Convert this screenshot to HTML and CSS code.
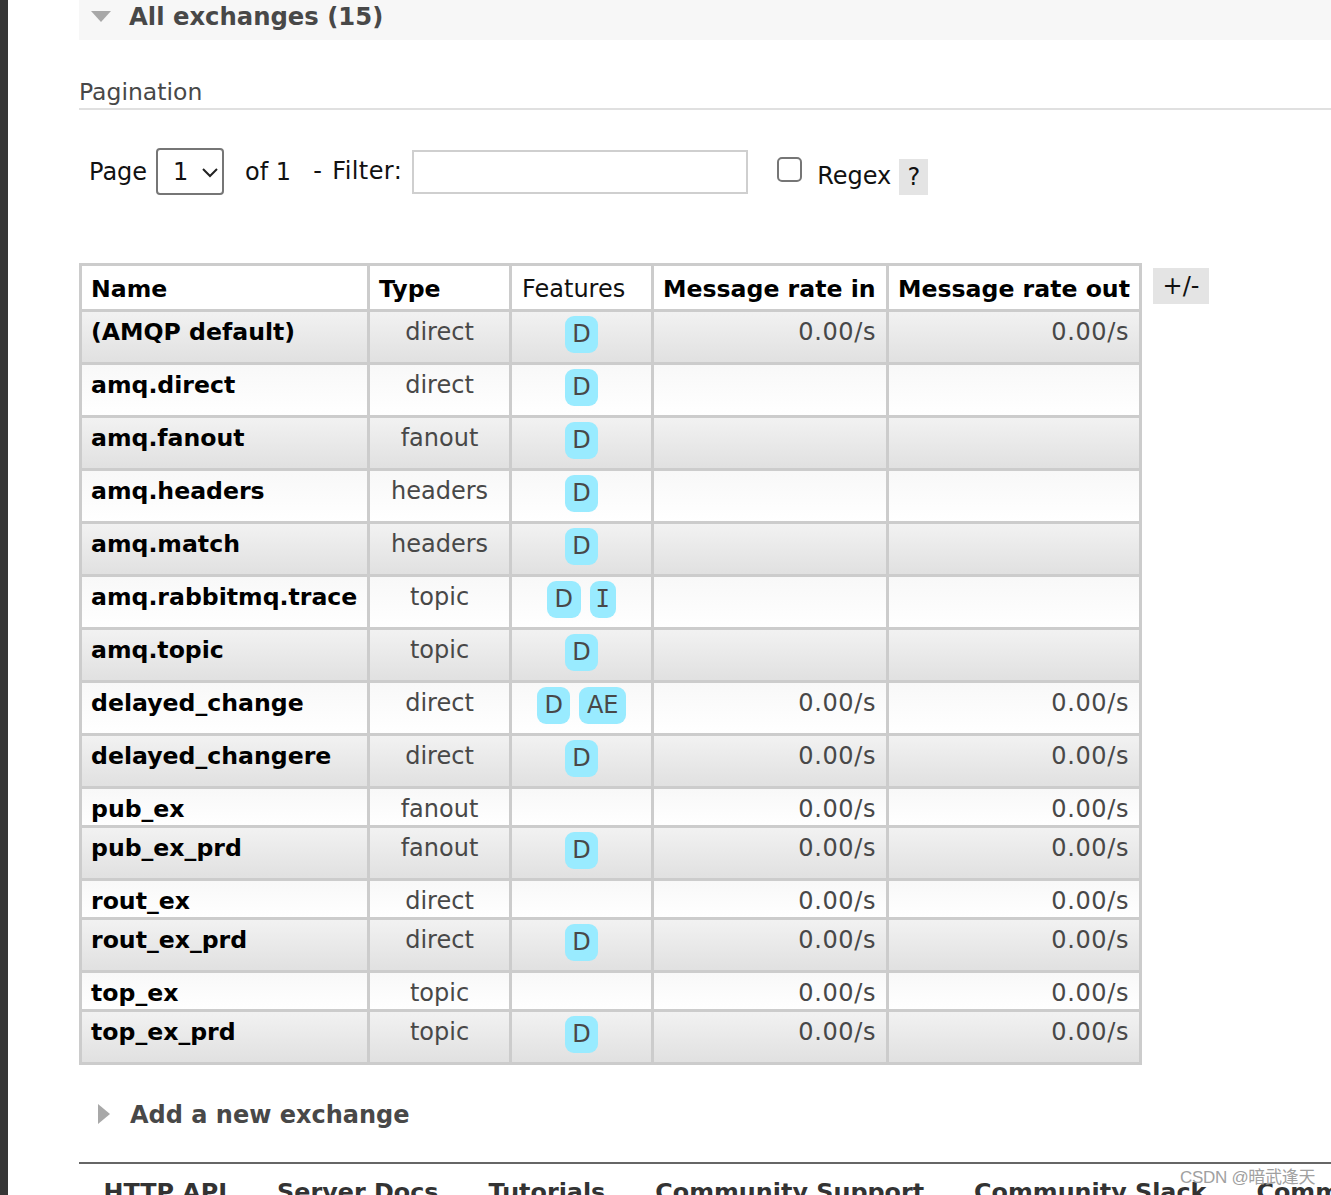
FILE: index.html
```html
<!DOCTYPE html>
<html lang="en">
<head>
<meta charset="utf-8">
<title>Exchanges</title>
<link rel="stylesheet" href="styles.css">
</head>
<body>
<div class="frame">
  <div class="sidebar"></div>
  <main class="main">
    <h2 class="section-head"><span class="tri-down"></span>All exchanges (15)</h2>

    <h3 class="pag-title">Pagination</h3>
    <div class="pag-row">
      <span class="lbl">Page</span>
      <span class="select"><span>1</span>
        <svg width="18" height="12" viewBox="0 0 18 12"><path d="M2 3 L9 10 L16 3" fill="none" stroke="#222" stroke-width="2"/></svg>
      </span>
      <span class="lbl of">of 1</span>
      <span class="lbl filter">- Filter:</span>
      <input class="filter-input" type="text">
      <span class="checkbox"></span>
      <span class="lbl regex">Regex</span>
      <span class="help">?</span>
    </div>

    <div class="table-wrap">
      <table class="list">
        <colgroup>
          <col class="c-name"><col class="c-type"><col class="c-feat"><col class="c-in"><col class="c-out">
        </colgroup>
        <thead>
          <tr>
            <th>Name</th><th>Type</th><th class="reg">Features</th><th>Message rate in</th><th>Message rate out</th>
          </tr>
        </thead>
        <tbody>
          <tr class="alt1"><td class="name">(AMQP default)</td><td class="type">direct</td><td class="feat"><div class="feats"><span class="badge">D</span></div></td><td class="num">0.00/s</td><td class="num">0.00/s</td></tr>
          <tr class="alt2"><td class="name">amq.direct</td><td class="type">direct</td><td class="feat"><div class="feats"><span class="badge">D</span></div></td><td class="num"></td><td class="num"></td></tr>
          <tr class="alt1"><td class="name">amq.fanout</td><td class="type">fanout</td><td class="feat"><div class="feats"><span class="badge">D</span></div></td><td class="num"></td><td class="num"></td></tr>
          <tr class="alt2"><td class="name">amq.headers</td><td class="type">headers</td><td class="feat"><div class="feats"><span class="badge">D</span></div></td><td class="num"></td><td class="num"></td></tr>
          <tr class="alt1"><td class="name">amq.match</td><td class="type">headers</td><td class="feat"><div class="feats"><span class="badge">D</span></div></td><td class="num"></td><td class="num"></td></tr>
          <tr class="alt2"><td class="name">amq.rabbitmq.trace</td><td class="type">topic</td><td class="feat"><div class="feats"><span class="badge">D</span><span class="badge mono">I</span></div></td><td class="num"></td><td class="num"></td></tr>
          <tr class="alt1"><td class="name">amq.topic</td><td class="type">topic</td><td class="feat"><div class="feats"><span class="badge">D</span></div></td><td class="num"></td><td class="num"></td></tr>
          <tr class="alt2"><td class="name">delayed_change</td><td class="type">direct</td><td class="feat"><div class="feats"><span class="badge">D</span><span class="badge">AE</span></div></td><td class="num">0.00/s</td><td class="num">0.00/s</td></tr>
          <tr class="alt1"><td class="name">delayed_changere</td><td class="type">direct</td><td class="feat"><div class="feats"><span class="badge">D</span></div></td><td class="num">0.00/s</td><td class="num">0.00/s</td></tr>
          <tr class="alt2"><td class="name">pub_ex</td><td class="type">fanout</td><td class="feat"></td><td class="num">0.00/s</td><td class="num">0.00/s</td></tr>
          <tr class="alt1"><td class="name">pub_ex_prd</td><td class="type">fanout</td><td class="feat"><div class="feats"><span class="badge">D</span></div></td><td class="num">0.00/s</td><td class="num">0.00/s</td></tr>
          <tr class="alt2"><td class="name">rout_ex</td><td class="type">direct</td><td class="feat"></td><td class="num">0.00/s</td><td class="num">0.00/s</td></tr>
          <tr class="alt1"><td class="name">rout_ex_prd</td><td class="type">direct</td><td class="feat"><div class="feats"><span class="badge">D</span></div></td><td class="num">0.00/s</td><td class="num">0.00/s</td></tr>
          <tr class="alt2"><td class="name">top_ex</td><td class="type">topic</td><td class="feat"></td><td class="num">0.00/s</td><td class="num">0.00/s</td></tr>
          <tr class="alt1"><td class="name">top_ex_prd</td><td class="type">topic</td><td class="feat"><div class="feats"><span class="badge">D</span></div></td><td class="num">0.00/s</td><td class="num">0.00/s</td></tr>
        </tbody>
      </table>
      <span class="toggle">+/-</span>
    </div>

    <h2 class="add-head"><span class="tri-right"></span>Add a new exchange</h2>

    <footer class="footer">
      <a>HTTP API</a>
      <a>Server Docs</a>
      <a>Tutorials</a>
      <a>Community Support</a>
      <a>Community Slack</a>
      <a>Commercial Support</a>
    </footer>
  </main>
</div>
<div class="watermark">CSDN @暗武逢天</div>
</body>
</html>
```
FILE: styles.css
```css
html, body {
  margin: 0;
  padding: 0;
  height: 1195px;
  overflow: hidden;
  background: #fff;
}
body {
  font-family: "DejaVu Sans", Verdana, sans-serif;
  color: #484848;
  position: relative;
}
.frame {
  display: flex;
  min-height: 1195px;
}
.sidebar {
  width: 8px;
  flex: none;
  background: #363636;
}
.main {
  flex: 1;
  padding-left: 71px;
  min-width: 0;
}
.section-head {
  margin: 0;
  height: 40px;
  box-sizing: border-box;
  background: #f7f7f7;
  font-size: 24.3px;
  font-weight: bold;
  line-height: 28px;
  padding: 3px 0 0 12px;
  display: flex;
  align-items: flex-start;
  color: #484848;
}
.tri-down {
  width: 0;
  height: 0;
  border-left: 10.5px solid transparent;
  border-right: 10.5px solid transparent;
  border-top: 11px solid #a8a8a8;
  margin: 8px 18px 0 0;
}
.pag-title {
  margin: 38px 0 0 0;
  font-size: 23.5px;
  font-weight: normal;
  line-height: 28px;
  padding-bottom: 2px;
  border-bottom: 2px solid #e0e0e0;
  color: #484848;
}
.pag-row {
  display: flex;
  align-items: center;
  margin-top: 38px;
  height: 47px;
  padding-left: 10px;
  font-size: 24px;
  color: #111;
}
.lbl { line-height: 28px; }
.select {
  margin-left: 9px;
  width: 68px;
  height: 47px;
  box-sizing: border-box;
  border: 2px solid #767676;
  border-radius: 4px;
  display: flex;
  align-items: center;
  padding-left: 15px;
  gap: 13px;
}
.of { margin-left: 21px; }
.filter { margin-left: 22px; margin-top: -2px; word-spacing: 2px; letter-spacing: 0.4px; }
.filter-input {
  margin-left: 10px;
  width: 336px;
  height: 44px;
  box-sizing: border-box;
  border: 2px solid #cfcfcf;
  padding: 0;
  outline: none;
}
.checkbox {
  margin-left: 29px;
  width: 25px;
  height: 25px;
  box-sizing: border-box;
  border: 2px solid #767676;
  border-radius: 5px;
  margin-top: -4px;
}
.regex { margin-left: 15px; margin-top: 8px; }
.help {
  margin-left: 8px;
  margin-top: 10px;
  width: 29px;
  height: 36px;
  background: #e4e4e4;
  display: flex;
  align-items: center;
  justify-content: center;
}
.table-wrap {
  margin-top: 68px;
  display: flex;
  align-items: flex-start;
  gap: 11px;
}
.list {
  border-collapse: collapse;
  table-layout: fixed;
  width: 1060px;
  font-size: 24px;
  line-height: 28px;
}
.c-name { width: 288px; }
.c-type { width: 142px; }
.c-feat { width: 142px; }
.c-in { width: 235px; }
.c-out { width: 253px; }
.list th, .list td {
  border: 3px solid #cccccc;
  vertical-align: top;
  white-space: nowrap;
}
.list th {
  background: #fff;
  color: #000;
  font-weight: bold;
  font-size: 23.6px;
  text-align: left;
  padding: 9px 9px 6px 9px;
}
.list th.reg { font-weight: normal; font-size: 24px; color: #111; padding-left: 10px; }
.list td {
  padding: 6px 10px 2px 10px;
  color: #484848;
}
.list td.feat { padding: 4px 10px; }
.list td.name { color: #000; font-weight: bold; font-size: 23.6px; padding-left: 9px; }
.list td.type { text-align: center; }
.list td.num { text-align: right; padding-right: 10px; letter-spacing: 0.6px; }
.alt1 { background: linear-gradient(#f2f2f2, #e0e0e0); }
.alt2 { background: linear-gradient(#f8f8f8, #ffffff); }
.feats {
  display: flex;
  justify-content: center;
  gap: 9px;
  padding-bottom: 5px;
}
.badge {
  display: block;
  height: 37px;
  line-height: 37px;
  padding: 0 7.5px;
  border-radius: 9px;
  background: #99ebff;
  color: #484848;
}
.badge.mono {
  font-family: "DejaVu Sans Mono", monospace;
  padding: 0 6px;
}
.toggle {
  margin-top: 5px;
  width: 56px;
  height: 36px;
  background: #e4e4e4;
  color: #111;
  font-size: 24px;
  display: flex;
  align-items: center;
  justify-content: center;
}
.add-head {
  margin: 36px 0 0 0;
  font-size: 24px;
  font-weight: bold;
  line-height: 28px;
  display: flex;
  align-items: flex-start;
  color: #484848;
}
.tri-right {
  width: 0;
  height: 0;
  border-top: 10px solid transparent;
  border-bottom: 10px solid transparent;
  border-left: 12px solid #a8a8a8;
  margin: 3px 20px 0 19px;
}
.footer {
  margin-top: 33px;
  border-top: 2px solid #666;
  padding: 14px 0 0 24.5px;
  display: flex;
  gap: 50px;
  white-space: nowrap;
  font-size: 23.85px;
  font-weight: bold;
  line-height: 28px;
  color: #333;
}
.watermark {
  position: absolute;
  left: 1180px;
  top: 1163px;
  font-family: "Liberation Sans", "Noto Sans CJK SC", sans-serif;
  font-size: 17px;
  color: #a0a0a0;
  letter-spacing: -0.3px;
}
```
